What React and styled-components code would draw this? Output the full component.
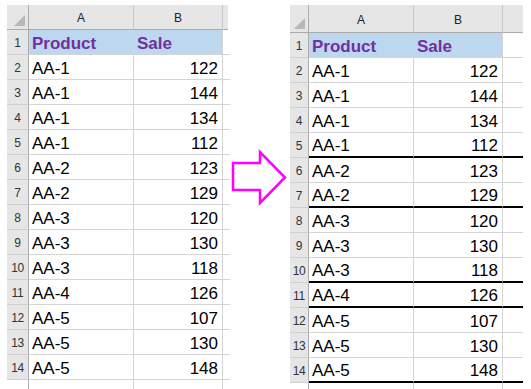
import React from "react";
import styled, { createGlobalStyle } from "styled-components";

const GlobalStyle = createGlobalStyle`
  html, body {
    margin: 0;
    padding: 0;
    background: #ffffff;
  }
  body {
    font-family: "Liberation Sans", Arial, sans-serif;
    overflow: hidden;
  }
`;

const rows = [
  ["AA-1", 122],
  ["AA-1", 144],
  ["AA-1", 134],
  ["AA-1", 112],
  ["AA-2", 123],
  ["AA-2", 129],
  ["AA-3", 120],
  ["AA-3", 130],
  ["AA-3", 118],
  ["AA-4", 126],
  ["AA-5", 107],
  ["AA-5", 130],
  ["AA-5", 148],
];

const Page = styled.div`
  display: flex;
  flex-direction: row;
  align-items: flex-start;
  width: 531px;
  height: 389px;
  padding: 5px 0 0 7px;
  box-sizing: border-box;
  overflow: hidden;
`;

const Sheet = styled.div`
  display: grid;
  grid-template-columns: ${(p) => p.$numWidth}px 105px 89px ${(p) => p.$tail}px;
  grid-template-rows: ${(p) => p.$headHeight}px repeat(15, 25px);
`;

const Corner = styled.div`
  position: relative;
  background: #e6e6e6;
  border-right: 1px solid #ababab;
  border-bottom: 1px solid #ababab;
  box-sizing: border-box;

  &::after {
    content: "";
    position: absolute;
    right: 3px;
    bottom: 3px;
    width: 0;
    height: 0;
    border-left: 11px solid transparent;
    border-bottom: 11px solid #b7b7b7;
  }
`;

const ColHead = styled.div`
  display: flex;
  align-items: center;
  justify-content: center;
  background: #e6e6e6;
  border-right: ${(p) => (p.$last ? "none" : "1px solid #c8c8c8")};
  border-bottom: 1px solid #ababab;
  box-sizing: border-box;
  font-size: 12px;
  color: #222;
  padding-top: 2px;
`;

const RowNum = styled.div`
  display: flex;
  align-items: flex-end;
  justify-content: center;
  background: ${(p) => (p.$blank ? "#ffffff" : "#e6e6e6")};
  border-right: 1px solid #ababab;
  border-bottom: ${(p) => (p.$blank ? "none" : "1px solid #d0d0d0")};
  box-sizing: border-box;
  font-size: 12px;
  color: #333;
  padding-bottom: 4px;
  letter-spacing: -0.3px;
`;

const Cell = styled.div`
  display: flex;
  align-items: flex-end;
  justify-content: ${(p) => (p.$right ? "flex-end" : "flex-start")};
  background: ${(p) => (p.$title ? "#bdd7ee" : "#ffffff")};
  border-right: ${(p) => (p.$last ? "none" : "1px solid #d4d4d4")};
  border-bottom: ${(p) =>
    p.$thick ? "2px solid #000000" : "1px solid #d4d4d4"};
  box-sizing: border-box;
  padding: 0 4px 0 3px;
  font-size: 17px;
  line-height: 1.15;
  color: ${(p) => (p.$title ? "#7030a0" : "#000000")};
  font-weight: ${(p) => (p.$title ? "bold" : "normal")};
  white-space: nowrap;
`;

const ArrowWrap = styled.div`
  width: 62px;
  padding: 141px 0 0 1px;
  box-sizing: border-box;
`;

function Grid({ numWidth, tail, headHeight, breaks = [] }) {
  return (
    <Sheet $numWidth={numWidth} $tail={tail} $headHeight={headHeight}>
      <Corner />
      <ColHead>A</ColHead>
      <ColHead>B</ColHead>
      <ColHead $last />

      <RowNum>1</RowNum>
      <Cell $title>Product</Cell>
      <Cell $title>Sale</Cell>
      <Cell $last />

      {rows.map(([name, sale], i) => {
        const n = i + 2;
        const thick = breaks.includes(n);
        return (
          <React.Fragment key={n}>
            <RowNum>{n}</RowNum>
            <Cell $thick={thick}>{name}</Cell>
            <Cell $thick={thick} $right>
              {sale}
            </Cell>
            <Cell $thick={thick} $last />
          </React.Fragment>
        );
      })}

      <RowNum $blank />
      <Cell />
      <Cell />
      <Cell $last />
    </Sheet>
  );
}

const Arrow = () => (
  <svg width="60" height="60" viewBox="0 0 60 60">
    <polygon
      points="4,17 31,17 31,6 56,31.5 31,57 31,44 4,44"
      fill="#ffffff"
      stroke="#ff00ff"
      strokeWidth="2.5"
      strokeLinejoin="miter"
    />
  </svg>
);

export default function App() {
  return (
    <>
      <GlobalStyle />
      <Page>
        <Grid numWidth={22} tail={5} headHeight={25} />
        <ArrowWrap>
          <Arrow />
        </ArrowWrap>
        <Grid numWidth={19} tail={20} headHeight={28} breaks={[5, 7, 10, 11, 14]} />
      </Page>
    </>
  );
}
